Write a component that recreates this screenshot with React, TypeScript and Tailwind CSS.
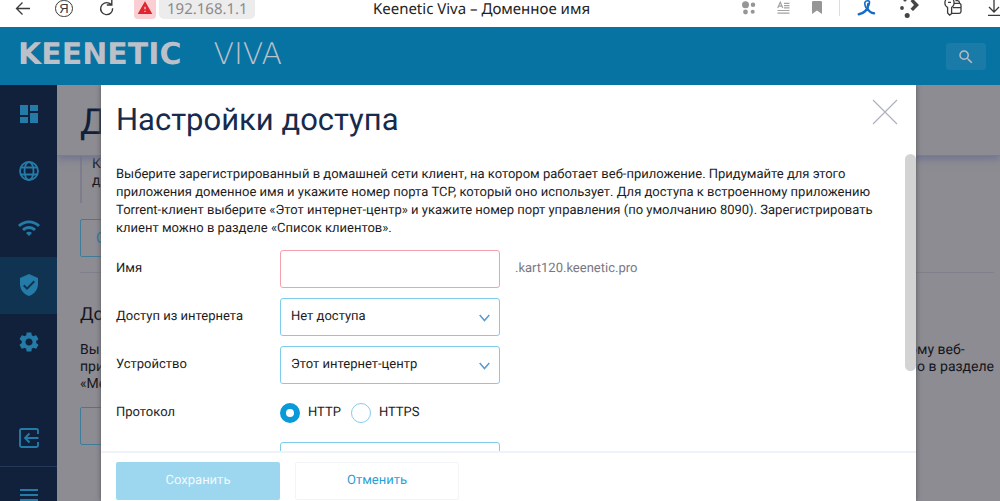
import React from "react";
import { MdDashboard, MdWifi, MdVerifiedUser, MdSettings, MdSearch, MdWarning } from "react-icons/md";

function BrowserBar() {
  return (
    <div className="flex h-[27px] shrink-0 items-start overflow-hidden bg-white font-['Noto_Sans',sans-serif] text-[15px] leading-[18px]">
      <div className="flex shrink-0 items-start pl-[14px]">
        <button aria-label="Назад" className="mr-[23px] block">
          <svg width="18" height="18" viewBox="0 0 18 18" fill="none" stroke="#3a3a3a" strokeWidth="1.3">
            <path d="M16 8.5H3M8.5 2.5L2.5 8.5L8.5 14.5" />
          </svg>
        </button>
        <button
          aria-label="Яндекс"
          className="mr-[26px] flex h-[17px] w-[18px] items-center justify-center rounded-full border border-[#3a3a3a] font-['Liberation_Sans',sans-serif] text-[13px] leading-none text-[#3a3a3a]"
        >
          Я
        </button>
        <button aria-label="Обновить" className="mr-[19px] block">
          <svg width="16" height="18" viewBox="0 0 16 18" fill="none" stroke="#3a3a3a" strokeWidth="1.4">
            <path d="M13.6 8.2A6 6 0 1 1 10.5 3.4L12.5 4.6M12.8 0V5H7.8" />
          </svg>
        </button>
        <span className="mr-[3px] flex h-[19px] w-[22px] justify-center rounded-b-[4px] bg-[#f9cfd3] text-[#e02430]">
          <MdWarning className="size-4" />
        </span>
        <span className="h-[19px] w-[96px] rounded-b-[5px] bg-[#ececec] pl-2 leading-[18px] text-[#8a8a8a]">192.168.1.1</span>
      </div>
      <div className="min-w-0 flex-1 pr-[24px] text-center leading-[18px] whitespace-nowrap text-[#222]">Keenetic Viva – Доменное имя</div>
      <div className="-mr-[17px] flex shrink-0 items-start">
        <span className="flex w-[34px] justify-center">
          <svg width="14" height="17" viewBox="0 0 14 17" fill="#969696">
            <circle cx="3.5" cy="4.7" r="3.5" />
            <circle cx="11" cy="4.7" r="2.3" />
            <circle cx="3.5" cy="12" r="2.4" />
            <circle cx="10.7" cy="11.7" r="2" />
          </svg>
        </span>
        <span className="flex w-[34px] justify-center">
          <svg width="13" height="17" viewBox="0 0 13 17" fill="none" stroke="#a3a3a3" strokeWidth="1.2">
            <path d="M.7 8L3.3 2.3L5.8 8M1.6 6.2H5M7 3.4H12.5M7 5.6H12.5M7 7.8H12.5M.5 10.5H12.5M.5 13.2H12.5" />
          </svg>
        </span>
        <span className="flex w-[34px] justify-center">
          <svg width="10" height="17" viewBox="0 0 10 17" fill="#969696">
            <path d="M0 2.2Q0 1 1.2 1H8.8Q10 1 10 2.2V14L5 10.5L0 14Z" />
          </svg>
        </span>
        <span className="mx-[5px] h-4 w-px bg-[#ddd]" />
        <span className="flex w-[43px] justify-center">
          <svg width="19" height="17" viewBox="0 0 19 17" fill="none" stroke="#126cc8" strokeLinecap="round">
            <path strokeWidth="1.6" d="M8.8 7.5C6.5 2 8.5 .7 11 .8C14.3 1.2 11.2 6 10.5 8" />
            <path strokeWidth="2.5" d="M11.3 4C11 10 6.5 13.8 1.8 14.3M10.4 8.5C12 11.5 14 13 17 13.2" />
          </svg>
        </span>
        <span className="flex w-[43px] justify-center">
          <svg width="20" height="19" viewBox="0 0 20 19" fill="#454545">
            <circle cx="5" cy="0" r="1.6" />
            <circle cx="2" cy="8" r="1.9" />
            <circle cx="7.2" cy="15.5" r="2.5" />
            <path d="M10.5 1L13 -1L19 5L13 11L10.5 8.8L14 5Z" />
          </svg>
        </span>
        <span className="flex w-[43px] justify-center">
          <svg width="18" height="17" viewBox="0 0 18 17" fill="none" stroke="#3a3a3a" strokeWidth="1.3">
            <path d="M1.6 0Q.2 3 1.6 5.6L3.6 7.6V13L5.6 15.2L7.6 13.6V7.6L9.4 5.6Q10.8 3 9.4 0M4 2.3H7M7.6 13.4H15.2Q17 13.4 17 11.6V5.2Q17 3.4 15.2 3.4H10.2M9 7.6H17M11.4 .7H13.6Q15.4 .8 15.6 3" />
          </svg>
        </span>
        <span className="flex w-[43px] justify-center">
          <svg width="15" height="17" viewBox="0 0 15 17" fill="none" stroke="#3a3a3a" strokeWidth="1.3">
            <path d="M6 0V12M1 7L6 12L11 7M0 15.4H12" />
          </svg>
        </span>
      </div>
    </div>
  );
}

function SiteHeader() {
  return (
    <header className="flex h-[58px] shrink-0 items-center justify-between border-t border-[#23688b] bg-[#0773a3] pr-[14px] pl-[18px]">
      <a href="#" className="flex items-center gap-[32px] pb-1 font-['DejaVu_Sans',sans-serif] text-[30px] leading-[36px] text-[#bcc0c8]">
        <span className="font-bold">KEENETIC</span>
        <span className="font-extralight">VIVA</span>
      </a>
      <button aria-label="Поиск" className="flex h-[27px] w-10 items-center justify-center rounded-[3px] bg-[#1a7ba8] text-[#b8bcc2]">
        <MdSearch className="size-[18px]" />
      </button>
    </header>
  );
}

function GlobeIcon({ className }: { className?: string }) {
  return (
    <svg className={className} viewBox="0 0 24 24" fill="none" stroke="currentColor" strokeWidth="1.8">
      <circle cx="12" cy="12" r="9" />
      <ellipse cx="12" cy="12" rx="4.5" ry="9" />
      <path d="M4 8.5H20M4 15.5H20" />
    </svg>
  );
}

const navItems = [
  { label: "Системный монитор", Icon: MdDashboard },
  { label: "Интернет", Icon: GlobeIcon },
  { label: "Wi-Fi", Icon: MdWifi },
  { label: "Сетевые правила", Icon: MdVerifiedUser, active: true },
  { label: "Управление", Icon: MdSettings },
];

function Sidebar() {
  return (
    <nav className="flex w-[57px] shrink-0 flex-col bg-[#12213b] pt-px text-[#257ba8]">
      {navItems.map(({ label, Icon, active }) => (
        <a
          key={label}
          href="#"
          aria-label={label}
          className={active ? "flex h-[57px] shrink-0 items-center justify-center bg-[#0f3350] pb-[2px]" : "flex h-[57px] shrink-0 items-center justify-center pb-[2px]"}
        >
          <Icon className="size-6" />
        </a>
      ))}
      <a href="#" aria-label="Выйти" className="mt-[38px] flex h-[57px] shrink-0 items-center justify-center">
        <svg width="20" height="20" viewBox="0 0 20 20" fill="none" stroke="currentColor" strokeWidth="1.9">
          <path d="M19 6V2.5Q19 1 17.5 1H2.5Q1 1 1 2.5V17.5Q1 19 2.5 19H17.5Q19 19 19 17.5V14M19.5 10H6.5M10.5 5.5L6 10L10.5 14.5" />
        </svg>
      </a>
      <button aria-label="Меню" className="flex h-[57px] shrink-0 items-center justify-center border-t border-[#22385a]">
        <svg width="18" height="16" viewBox="0 0 18 16" fill="none" stroke="currentColor" strokeWidth="1.8">
          <path d="M0 3H18M0 8H18M0 13H18" />
        </svg>
      </button>
    </nav>
  );
}

function Page() {
  return (
    <main className="min-w-0 flex-1 overflow-hidden bg-[#8d8c92] text-[14px] leading-[17px] text-[#15151c]">
      <div className="relative flex h-[71px] items-center border-b border-[#7b7d8e] pt-1 pl-[23px] shadow-[0_3px_8px_#6d7390]">
        <h1 className="text-[36px] leading-[40px] text-[#121f3a]">Д</h1>
      </div>
      <div className="pr-[6px] pl-[23px]">
        <div className="h-[47px] border-l-2 border-[#7d7c8c] pl-[10px]">
          К
          <br />
          д
        </div>
        <button className="mt-4 h-[38px] w-[164px] rounded-[2px] border border-[#3f7c98] pl-[15px] text-left text-[#257ba8]">О</button>
        <hr className="mt-[15px] border-[#817f89]" />
        <h2 className="mt-[31px] text-[18px] leading-[22px]">До</h2>
        <div className="mt-4 flex justify-between">
          <p>
            Вы
            <br />
            при
            <br />
            «Ме
          </p>
          <p>
            ому веб-
            <br />
            но в разделе
          </p>
        </div>
        <button aria-label="Добавить" className="mt-[14px] h-[38px] w-[164px] rounded-[2px] border border-[#3f7c98]" />
      </div>
    </main>
  );
}

function Chevron() {
  return (
    <svg className="pointer-events-none absolute top-[16px] right-[10px]" width="11" height="8" viewBox="0 0 11 8" fill="none" stroke="#5a9bd0" strokeWidth="1.5">
      <path d="M.7 1L5.5 6.5L10.3 1" />
    </svg>
  );
}

function SelectRow({ id, label, value }: { id: string; label: string; value: string }) {
  return (
    <div className="flex items-center">
      <label htmlFor={id} className="w-[164px] shrink-0">
        {label}
      </label>
      <div className="relative w-[220px]">
        <select id={id} className="block h-[38px] w-full appearance-none rounded-[3px] border border-[#7fcbea] bg-white pl-[10px] [text-rendering:geometricPrecision]">
          <option>{value}</option>
        </select>
        <Chevron />
      </div>
    </div>
  );
}

function AccessDialog() {
  return (
    <section
      role="dialog"
      aria-labelledby="dialog-title"
      className="relative flex min-w-0 flex-1 flex-col bg-white text-[13px] leading-[18px] text-[#1c1c1c] shadow-[0_0_5px_#55555a]"
    >
      <div className="flex h-[69px] shrink-0 items-start justify-between pt-[14px] pr-[18px] pl-[15px]">
        <h2 id="dialog-title" className="text-[31px] leading-[42px] text-[#172b4d]">
          Настройки доступа
        </h2>
        <button aria-label="Закрыть">
          <svg width="26" height="26" viewBox="0 0 26 26" fill="none" stroke="#adb1bd" strokeWidth="1.2">
            <path d="M1 1L25 25M25 1L1 25" />
          </svg>
        </button>
      </div>
      <div className="min-h-0 flex-1 overflow-hidden px-[15px] pt-3">
        <p>
          Выберите зарегистрированный в домашней сети клиент, на котором работает веб-приложение. Придумайте для этого
          <br />
          приложения доменное имя и укажите номер порта TCP, который оно использует. Для доступа к встроенному приложению
          <br />
          Torrent-клиент выберите «Этот интернет-центр» и укажите номер порт управления (по умолчанию 8090). Зарегистрировать
          <br />
          клиент можно в разделе «Список клиентов».
        </p>
        <form className="mt-3 flex flex-col gap-[10px]">
          <div className="flex items-center">
            <label htmlFor="name" className="w-[164px] shrink-0">
              Имя
            </label>
            <input id="name" className="h-[38px] w-[220px] rounded-[3px] border border-[#f2a0ac] px-[10px]" />
            <span className="ml-[15px] text-[#777783]">.kart120.keenetic.pro</span>
          </div>
          <SelectRow id="access" label="Доступ из интернета" value="Нет доступа" />
          <SelectRow id="device" label="Устройство" value="Этот интернет-центр" />
          <div role="radiogroup" aria-labelledby="protocol" className="flex h-[38px] items-center">
            <span id="protocol" className="w-[164px] shrink-0">
              Протокол
            </span>
            <label className="mr-[10px] flex items-center gap-2">
              <input type="radio" name="protocol" defaultChecked className="size-5 appearance-none rounded-full border border-[#85cdec] checked:border-[6px] checked:border-[#0a9ad8]" />
              HTTP
            </label>
            <label className="flex items-center gap-2">
              <input type="radio" name="protocol" className="size-5 appearance-none rounded-full border border-[#85cdec] checked:border-[6px] checked:border-[#0a9ad8]" />
              HTTPS
            </label>
          </div>
          <div className="flex pl-[164px]">
            <input aria-label="Порт TCP" className="h-[38px] w-[220px] rounded-[3px] border border-[#7fcbea] px-[10px]" />
          </div>
        </form>
      </div>
      <div className="flex h-[50px] shrink-0 items-start gap-[15px] border-t-2 border-[#edf3f9] px-[15px] pt-[9px]">
        <button className="h-[38px] w-[164px] rounded-[2px] bg-[#9dd6ef] text-[#f2fafd] [text-rendering:geometricPrecision]">Сохранить</button>
        <button className="h-[38px] w-[164px] rounded-[2px] border border-[#f3f4f6] text-[#2a9fd6] [text-rendering:geometricPrecision]">Отменить</button>
      </div>
      <div className="absolute top-[69px] right-0 h-[217px] w-[11px] rounded-full bg-[#d3d3d3]" />
    </section>
  );
}

export default function App() {
  return (
    <div className="flex h-screen flex-col overflow-hidden font-[Roboto,sans-serif] [text-rendering:geometricPrecision]">
      <BrowserBar />
      <SiteHeader />
      <div className="relative flex min-h-0 flex-1 overflow-hidden">
        <Sidebar />
        <Page />
        <div className="absolute inset-0 flex pr-[84px] pl-[101px]">
          <AccessDialog />
        </div>
      </div>
    </div>
  );
}
